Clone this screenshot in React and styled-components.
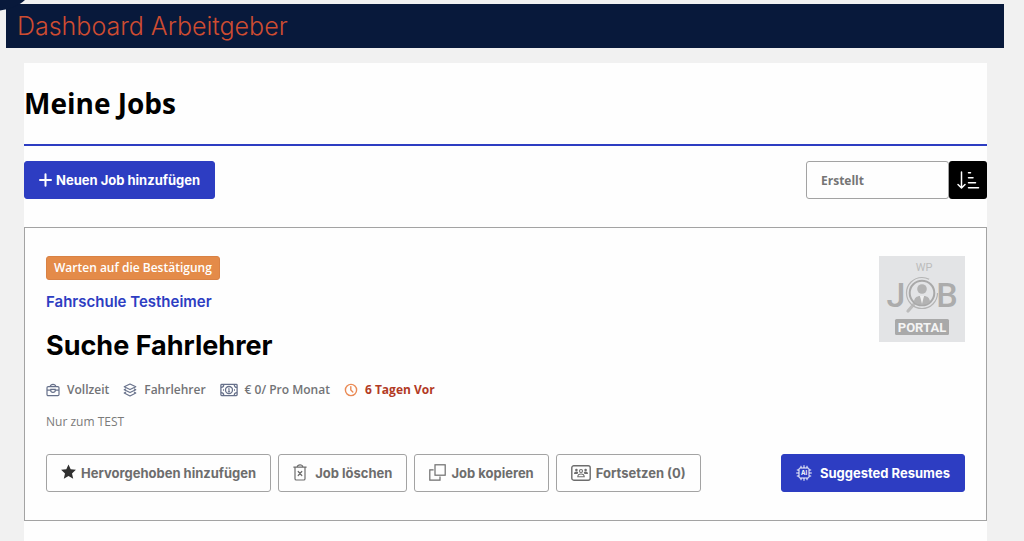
import React, { useState } from 'react';
import styled, { createGlobalStyle } from 'styled-components';

const GlobalStyle = createGlobalStyle`
  * {
    box-sizing: border-box;
  }

  body {
    margin: 0;
    background: #f1f1f1;
    font-family: 'Open Sans', sans-serif;
    color: #727376;
  }

  h1, h2, h3, p, ul {
    margin: 0;
    padding: 0;
  }
`;

const Page = styled.div`
  position: relative;
  display: flex;
  flex-direction: column;
  min-height: 100vh;
  padding-top: 4px;
`;

const Corner = styled.svg`
  position: absolute;
  top: 0;
  left: 0;
`;

const TopBar = styled.header`
  display: flex;
  align-items: center;
  height: 44px;
  margin: 0 20px 0 6px;
  padding: 0 11px;
  background: #08193b;
`;

const TopTitle = styled.h1`
  font-family: Inter, sans-serif;
  font-size: 25px;
  font-weight: 300;
  line-height: 32px;
  color: #ce4c31;
`;

const Panel = styled.main`
  flex: 1;
  margin: 15px 37px 0 24px;
  padding-bottom: 20px;
  background: #fefefe;
`;

const PanelHead = styled.div`
  padding: 19px 0 20px;
  border-bottom: 2px solid #2d3dc2;
`;

const PanelTitle = styled.h2`
  font-size: 28px;
  font-weight: 700;
  line-height: 42px;
  color: #000;
`;

const Toolbar = styled.div`
  display: flex;
  justify-content: space-between;
  align-items: center;
  padding: 15px 0 28px;
`;

const Button = styled.button`
  display: inline-flex;
  align-items: center;
  gap: ${props => props.$gap || 8}px;
  height: 38px;
  padding: 0 14px;
  border: 1px solid ${props => (props.$primary ? '#2d3dc2' : '#a3a3a3')};
  border-radius: 3px;
  background: ${props => (props.$primary ? '#2d3dc2' : '#fefefe')};
  color: ${props => (props.$primary ? '#fff' : '#6d6d6d')};
  font-family: Inter, sans-serif;
  font-size: 13px;
  font-weight: 700;
  white-space: nowrap;
  cursor: pointer;

  svg {
    flex: none;
  }
`;

const SortGroup = styled.div`
  display: flex;
`;

const SortSelect = styled.select`
  appearance: none;
  width: 143px;
  height: 38px;
  padding: 0 14px;
  border: 1px solid #a3a3a3;
  border-radius: 3px;
  background: #fefefe;
  color: #757575;
  font-family: 'Open Sans', sans-serif;
  font-size: 12px;
  font-weight: 700;
`;

const SortButton = styled.button`
  display: flex;
  align-items: center;
  justify-content: center;
  width: 38px;
  height: 38px;
  padding: 0;
  border: 0;
  border-radius: 3px;
  background: #000;
  color: #fff;
  cursor: pointer;
`;

const Card = styled.article`
  padding: 28px 21px;
  border: 1px solid #a3a3a3;
`;

const CardTop = styled.div`
  display: flex;
  justify-content: space-between;
  align-items: flex-start;
`;

const Status = styled.p`
  width: fit-content;
  height: 24px;
  padding: 0 7px;
  border: 1px solid #d98245;
  border-radius: 3px;
  background: #e48b49;
  color: #fff;
  font-size: 12px;
  font-weight: 600;
  line-height: 22px;
`;

const Company = styled.a`
  display: block;
  margin-top: 12px;
  font-family: Inter, sans-serif;
  font-size: 15px;
  font-weight: 600;
  line-height: 20px;
  color: #2d3dc2;
  text-decoration: none;
`;

const JobTitle = styled.h3`
  margin-top: 16px;
  font-family: Inter, sans-serif;
  font-size: 27px;
  font-weight: 700;
  line-height: 36px;
  color: #000;
`;

const Meta = styled.ul`
  display: flex;
  flex-wrap: wrap;
  gap: 14px;
  margin-top: 16px;
  list-style: none;
`;

const MetaItem = styled.li`
  display: flex;
  align-items: center;
  gap: 7px;
  font-size: 12px;
  font-weight: ${props => (props.$alert ? 700 : 600)};
  line-height: 20px;
  color: ${props => (props.$alert ? '#b23a24' : '#727376')};

  svg {
    flex: none;
    color: ${props => (props.$alert ? '#ea8a55' : '#66708a')};
  }
`;

const Description = styled.p`
  margin-top: 12px;
  font-size: 12px;
  line-height: 20px;
  color: #7a7a7a;
`;

const Actions = styled.div`
  display: flex;
  flex-wrap: wrap;
  justify-content: space-between;
  gap: 7px;
  margin-top: 22px;
`;

const ActionGroup = styled.div`
  display: flex;
  flex-wrap: wrap;
  gap: 7px;
`;

const Icon = ({ w, h, children, ...props }) => (
  <svg
    width={w}
    height={h}
    viewBox={`0 0 ${w} ${h}`}
    fill="none"
    stroke="currentColor"
    strokeWidth="1.2"
    aria-hidden="true"
    {...props}
  >
    {children}
  </svg>
);

const PlusIcon = () => (
  <Icon w={13} h={14} strokeWidth="2" strokeLinecap="round">
    <path d="M6.500 1.200v11.600M1 7h11" />
  </Icon>
);

const SortIcon = () => (
  <Icon w={24} h={20} strokeWidth="1.5" strokeLinecap="round" strokeLinejoin="round">
    <path d="M5.5 2v15.5M2 14.5l3.5 3.5 3.5-3.5" />
    <path d="M12.5 2.8h2M12.5 7.8h4.5M12.5 12.8h7M12.5 17.8h10" />
  </Icon>
);

const BagIcon = () => (
  <Icon w={14} h={14}>
    <rect x="1" y="3.6" width="12" height="9" rx="1.2" />
    <path d="M4.2 3.6c0-3 5.6-3 5.6 0M1 7.2h3.8M9.2 7.2H13M4.8 6.4v1.4c0 2 4.4 2 4.4 0V6.4z" />
  </Icon>
);

const LayersIcon = () => (
  <Icon w={14} h={14} strokeWidth="1.1" strokeLinejoin="round">
    <path d="M7 1l5.8 2.7L7 6.4 1.2 3.7z" />
    <path d="M3 5.8L1.2 6.8 7 9.6l5.8-2.8L11 5.8M3 9L1.2 10 7 13l5.8-3L11 9" />
  </Icon>
);

const MoneyIcon = () => (
  <Icon w={18} h={14} strokeWidth="1.3">
    <rect x="0.9" y="1.4" width="16.2" height="11.2" rx="0.8" />
    <circle cx="9" cy="7" r="3.5" />
    <path d="M8.2 5.7H9v3M7.9 8.7h2.2" strokeWidth="1.1" />
    <path d="M1 4.4c1.7 0 2.7-1 2.7-2.6M1 9.6c1.7 0 2.7 1 2.7 2.6M17 4.4c-1.7 0-2.7-1-2.7-2.6M17 9.6c-1.7 0-2.7 1-2.7 2.6M3 7h1M14 7h1" />
  </Icon>
);

const ClockIcon = () => (
  <Icon w={14} h={14} strokeWidth="1.4" strokeLinecap="round">
    <circle cx="7" cy="7" r="5.6" />
    <path d="M6.8 3.6V7l2 2" />
  </Icon>
);

const StarIcon = () => (
  <Icon w={15} h={18} stroke="none">
    <path
      d="M7.5 .4l2.200 4.900 5.200.5-3.900 3.600 1.200 5.300-4.700-2.800-4.700 2.800 1.200-5.300L.1 5.800l5.200-.5z"
      fill="#303030"
    />
  </Icon>
);

const TrashIcon = () => (
  <Icon w={14} h={18} strokeLinecap="round">
    <path d="M.8 3.100h12.400M4.200 2.900c0-2.600 5.600-2.600 5.600 0M2 3.300v11.400c0 .8.5 1.300 1.300 1.300h7.400c.8 0 1.300-.5 1.300-1.300V3.300" />
    <path d="M5.200 7.500l3.600 4M8.800 7.500l-3.600 4" />
  </Icon>
);

const CopyIcon = () => (
  <Icon w={17} h={18}>
    <rect x="6" y=".8" width="10.2" height="10.4" />
    <path d="M4.6 5.800H.8v10.4H11v-3.600" />
  </Icon>
);

const PeopleIcon = () => (
  <Icon w={20} h={16} strokeWidth="1.4">
    <rect x="0.8" y="0.8" width="18.4" height="14.4" rx="2" />
    <g fill="currentColor" stroke="none">
      <circle cx="5.4" cy="5" r="1.3" />
      <circle cx="14.6" cy="5" r="1.3" />
      <path d="M3 9c0-3 4-3 4.2-1.2L6.4 9zM17 9c0-3-4-3-4.2-1.2l.8 1.2z" />
    </g>
    <circle cx="10" cy="6" r="1.5" strokeWidth="1.1" />
    <path d="M6.8 11.8c0-3.8 6.4-3.8 6.4 0z" strokeWidth="1.1" />
  </Icon>
);

const ChipIcon = () => (
  <Icon w={16} h={16} strokeWidth="1">
    <rect x="3" y="3" width="10" height="10" rx="1" />
    <path d="M5 .8V3M8 .2V3M11 .8V3M5 13v2.2M8 13v2.8M11 13v2.2M.8 5H3M.2 8H3M.8 11H3M13 5h2.2M13 8h2.8M13 11h2.2" />
    <text
      x="8"
      y="10.2"
      textAnchor="middle"
      fontFamily="Inter, sans-serif"
      fontSize="6"
      fontWeight="700"
      fill="currentColor"
      stroke="none"
    >
      AI
    </text>
  </Icon>
);

const CompanyLogo = () => (
  <svg width="86" height="86" viewBox="0 0 86 86" role="img" aria-label="WP Job Portal">
    <rect width="86" height="86" fill="#e3e4e6" />
    <g fontFamily="Roboto, sans-serif" fill="#acacac" textAnchor="middle">
      <text x="45" y="15" fontSize="11" fill="#bcbcbc">WP</text>
      <text x="17" y="51" fontSize="34" fontWeight="500">J</text>
      <text x="68" y="51" fontSize="34" fontWeight="500">B</text>
    </g>
    <path d="M36 47l-7 8" stroke="#bcbcbc" strokeWidth="3.2" strokeLinecap="round" />
    <circle cx="43" cy="37" r="15.5" fill="none" stroke="#b4b4b4" strokeWidth="1.2" strokeDasharray="80 18" />
    <circle cx="43" cy="37" r="12.3" fill="#e3e4e6" stroke="#a9a9a9" strokeWidth="2" />
    <circle cx="43" cy="33" r="4.8" fill="#b3b3b3" />
    <path d="M35 46c0-4 3-6 6-6l2 3 2-3c3 0 6 2 6 6-4 3.600-12 3.600-16 0z" fill="#b3b3b3" />
    <path d="M41 40l2 8 2-8z" fill="#efefef" />
    <rect x="16" y="63" width="54" height="16" rx="1.5" fill="#a9a9a9" />
    <text
      x="43"
      y="76"
      textAnchor="middle"
      fontFamily="Roboto, sans-serif"
      fontSize="13"
      fontWeight="700"
      fill="#f4f4f4"
    >
      PORTAL
    </text>
  </svg>
);

const metaItems = [
  { id: 'type', icon: BagIcon, text: 'Vollzeit' },
  { id: 'category', icon: LayersIcon, text: 'Fahrlehrer' },
  { id: 'salary', icon: MoneyIcon, text: '€ 0/ Pro Monat' },
  { id: 'posted', icon: ClockIcon, text: '6 Tagen Vor', alert: true },
];

const actions = [
  { id: 'feature', icon: StarIcon, text: 'Hervorgehoben hinzufügen', gap: 5 },
  { id: 'delete', icon: TrashIcon, text: 'Job löschen' },
  { id: 'copy', icon: CopyIcon, text: 'Job kopieren', gap: 5 },
  { id: 'resumes', icon: PeopleIcon, text: 'Fortsetzen (0)', gap: 5 },
];

function App() {
  const [sortBy, setSortBy] = useState('created');

  return (
    <>
      <GlobalStyle />
      <Page>
        <TopBar>
          <TopTitle>Dashboard Arbeitgeber</TopTitle>
        </TopBar>
        <Corner width="26" height="12" viewBox="0 0 26 12" aria-hidden="true">
          <path d="M0 0h25C20 5 11 9 0 10.5z" fill="#08193b" />
        </Corner>

        <Panel>
          <PanelHead>
            <PanelTitle>Meine Jobs</PanelTitle>
          </PanelHead>

          <Toolbar>
            <Button type="button" $primary $gap={4}>
              <PlusIcon />
              Neuen Job hinzufügen
            </Button>
            <SortGroup>
              <SortSelect
                aria-label="Sortieren nach"
                value={sortBy}
                onChange={(e) => setSortBy(e.target.value)}
              >
                <option value="created">Erstellt</option>
              </SortSelect>
              <SortButton type="button" aria-label="Sortierung umkehren">
                <SortIcon />
              </SortButton>
            </SortGroup>
          </Toolbar>

          <Card>
            <CardTop>
              <div>
                <Status>Warten auf die Bestätigung</Status>
                <Company href="#company">Fahrschule Testheimer</Company>
                <JobTitle>Suche Fahrlehrer</JobTitle>
                <Meta>
                  {metaItems.map(item => (
                    <MetaItem key={item.id} $alert={item.alert}>
                      <item.icon />
                      {item.text}
                    </MetaItem>
                  ))}
                </Meta>
                <Description>Nur zum TEST</Description>
              </div>
              <CompanyLogo />
            </CardTop>

            <Actions>
              <ActionGroup>
                {actions.map(action => (
                  <Button key={action.id} type="button" $gap={action.gap}>
                    <action.icon />
                    {action.text}
                  </Button>
                ))}
              </ActionGroup>
              <Button type="button" $primary>
                <ChipIcon />
                Suggested Resumes
              </Button>
            </Actions>
          </Card>
        </Panel>
      </Page>
    </>
  );
}

export default App;
